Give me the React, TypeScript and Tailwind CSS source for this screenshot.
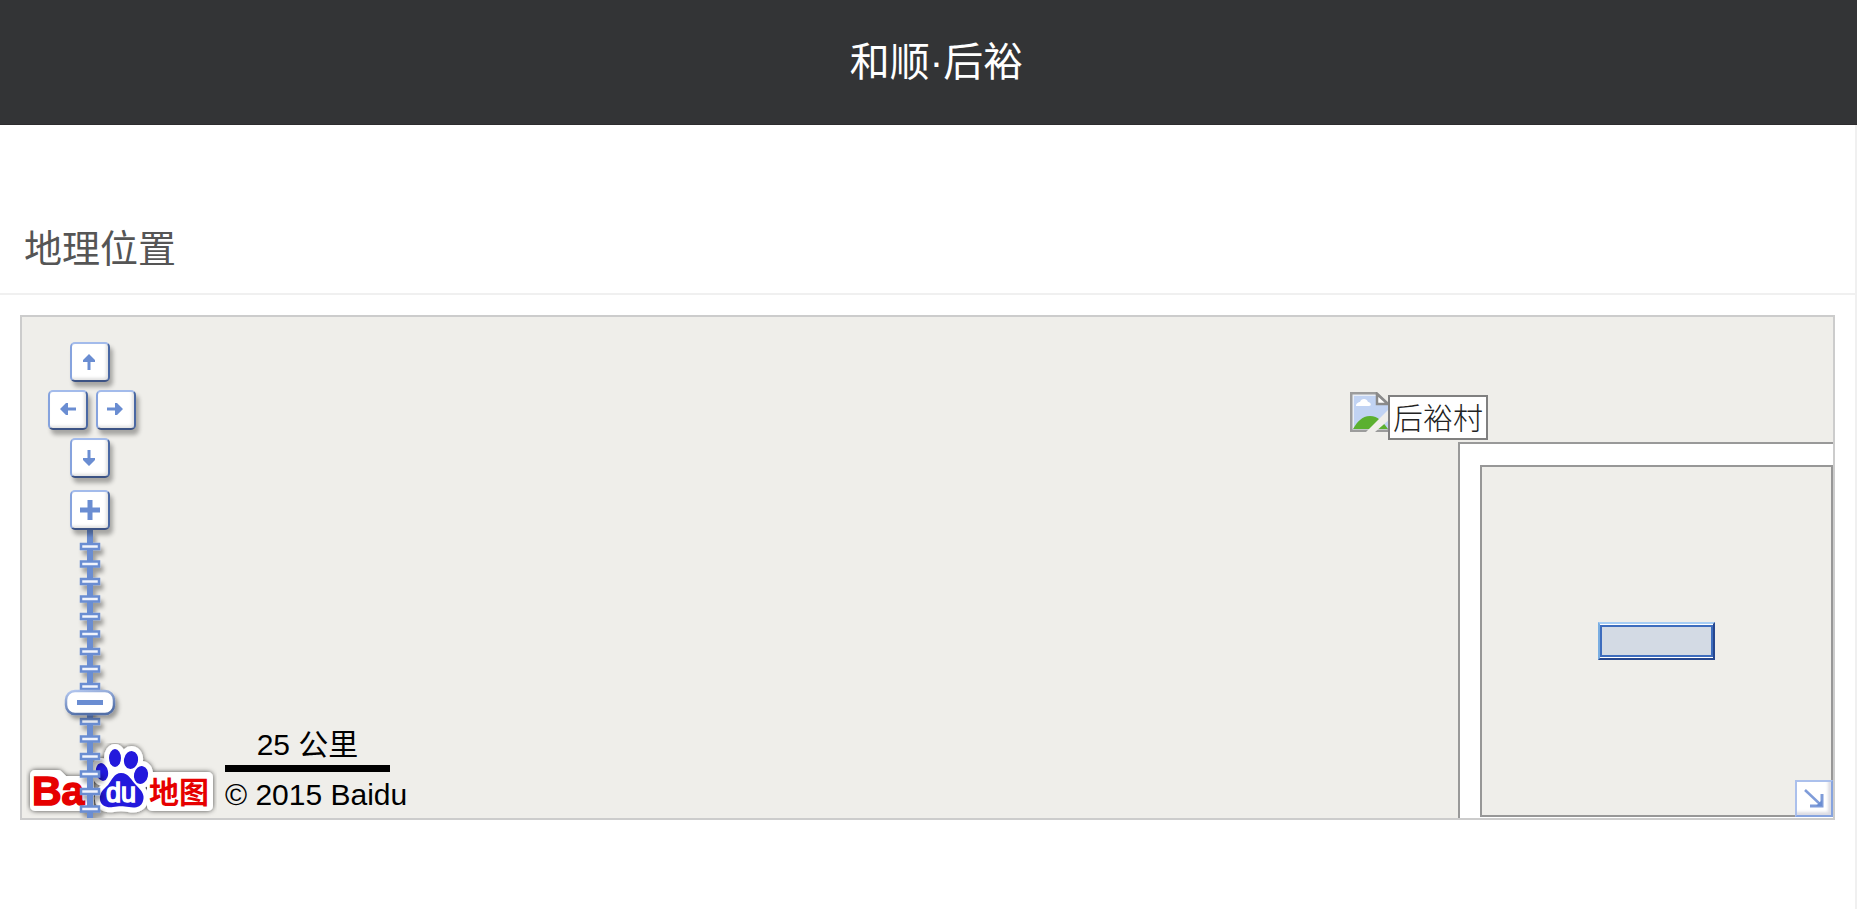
import { useState } from "react";

const TICKS = Array.from({ length: 16 }, (_, i) => 16 + i * 17.5);

const PAN_ARROWS = {
  up: "M17 10l6 6v2h-4.500v8h-3v-8H11v-2z",
  down: "M17 26l6-6v-2h-4.500v-8h-3v8H11v2z",
  left: "M10 17l6-6h2v4.500h8v3h-8V23h-2z",
  right: "M25 17l-6-6h-2v4.500H9v3h8V23h2z",
  plus: "M15.500 8h5v7.500H28v5h-7.500V28h-5v-7.500H8v-5h7.500z"
};

type ControlKind = keyof typeof PAN_ARROWS;

function ControlButton({ kind, label }: { kind: ControlKind; label: string }) {
  return (
    <button
      type="button"
      aria-label={label}
      className="relative z-10 block h-10 w-10 shrink-0 rounded-[5px] border-2 border-t-[#a3bbeb] border-r-[#4a68a3] border-b-[#3c5384] border-l-[#86a3de] bg-white shadow-[3px_5px_4px_rgba(0,0,0,0.3),inset_-2px_-2px_3px_rgba(0,0,0,0.12)]"
    >
      <svg viewBox="0 0 36 36" className="h-9 w-9" fill="#6a8dd2">
        <path d={PAN_ARROWS[kind]} />
      </svg>
    </button>
  );
}

function ZoomSlider() {
  const [zoom, setZoom] = useState(7);

  return (
    <div className="relative -ml-[5px] h-[288px] w-[50px]">
      <svg viewBox="0 0 50 288" className="h-full w-full overflow-visible">
        <defs>
          <filter id="railShadow" x="-50%" y="-5%" width="220%" height="110%">
            <feDropShadow dx="3" dy="5" stdDeviation="2" floodColor="#000" floodOpacity="0.35" />
          </filter>
          <filter id="thumbShadow" x="-20%" y="-20%" width="150%" height="190%">
            <feDropShadow dx="3" dy="4" stdDeviation="2" floodColor="#000" floodOpacity="0.35" />
          </filter>
          <linearGradient id="thumbEdge" x1="0" y1="0" x2="0.4" y2="1">
            <stop offset="0" stopColor="#b4c8f0" />
            <stop offset="1" stopColor="#526fa8" />
          </linearGradient>
        </defs>
        <g filter="url(#railShadow)">
          <rect x="22" y="0" width="6" height="288" fill="#6a8dd2" />
          {TICKS.map((y) => (
            <rect key={y} x="16" y={y - 2} width="18" height="5" fill="#f1f4fc" stroke="#6a8dd2" strokeWidth="2.5" />
          ))}
        </g>
        <rect
          x="1"
          y="161"
          width="48"
          height="23"
          rx="9"
          fill="#fff"
          stroke="url(#thumbEdge)"
          strokeWidth="2.5"
          filter="url(#thumbShadow)"
        />
        <rect x="12" y="170" width="26" height="5" fill="#6a8dd2" />
      </svg>
      <input
        type="range"
        min={1}
        max={18}
        value={zoom}
        aria-label="缩放级别"
        onChange={(e) => setZoom(Number(e.target.value))}
        className="absolute inset-0 h-full w-full opacity-0 [writing-mode:vertical-lr]"
      />
    </div>
  );
}

function NavigationControl() {
  return (
    <div className="absolute top-[25px] left-[26px] z-10 flex flex-col gap-2">
      <div className="pl-[22px]">
        <ControlButton kind="up" label="向上平移" />
      </div>
      <div className="flex gap-2">
        <ControlButton kind="left" label="向左平移" />
        <ControlButton kind="right" label="向右平移" />
      </div>
      <div className="flex flex-col gap-3 pl-[22px]">
        <ControlButton kind="down" label="向下平移" />
        <div>
          <ControlButton kind="plus" label="放大一级" />
          <ZoomSlider />
        </div>
      </div>
    </div>
  );
}

function PawShapes() {
  return (
    <>
      <ellipse cx="88" cy="12" rx="6" ry="9" />
      <ellipse cx="104" cy="14" rx="7" ry="9" transform="rotate(10 104 14)" />
      <ellipse cx="75" cy="26" rx="6" ry="9" transform="rotate(-12 75 26)" />
      <ellipse cx="114" cy="29" rx="7" ry="9" transform="rotate(12 114 29)" />
      <path d="M94 27c8 0 10 7 15 12 6 6 9 10 7 16-2 7-9 7-14 6-6-1-10-1-16 0-6 1-12-1-13-7-1-7 3-10 8-15 4-5 6-12 13-12z" />
    </>
  );
}

function BaiduLogo() {
  return (
    <a href="#baidu" aria-label="百度地图" className="absolute bottom-1 left-[5px] block">
      <svg viewBox="0 0 191 68" className="h-[68px] w-[191px] overflow-visible">
        <defs>
          <filter id="logoShadow" x="-5%" y="-10%" width="110%" height="125%">
            <feDropShadow dx="0" dy="0" stdDeviation="2.500" floodColor="#000" floodOpacity="0.7" />
          </filter>
        </defs>
        <g fill="#fff" stroke="#fff" strokeWidth="10" strokeLinejoin="round" filter="url(#logoShadow)">
          <path d="M8 29h23l6 6h25v25H8z" />
          <rect x="125" y="31" width="56" height="29" />
          <PawShapes />
        </g>
        <g fill="#e60000">
          <text
            x="5"
            y="59"
            fontSize="41"
            fontWeight="700"
            stroke="#e60000"
            strokeWidth="1.5"
            className="font-['Liberation_Sans',sans-serif]"
          >
            Ba
          </text>
          <text x="122" y="57" fontSize="30" fontWeight="700" className="font-['Noto_Sans_CJK_SC',sans-serif]">
            地图
          </text>
        </g>
        <g fill="#2319dc">
          <PawShapes />
        </g>
        <text
          x="79"
          y="56"
          fontSize="27"
          fill="#fff"
          stroke="#fff"
          strokeWidth="1.5"
          className="font-['Liberation_Sans',sans-serif]"
        >
          du
        </text>
      </svg>
    </a>
  );
}

function MissingImageIcon() {
  return (
    <svg viewBox="0 0 40 40" className="h-10 w-10 shrink-0">
      <path d="M1 1h25l13 12v26H1z" fill="#e9eef6" stroke="#9c9c9c" strokeWidth="3" />
      <path d="M4 4h22v9h12v24H4z" fill="#c1d3f3" />
      <path d="M6 14c0-3 3-4 4-4 1-4 7-4 8 0 3 0 4 4 1 4z" fill="#fff" />
      <path d="M3 37c4-7 9-13 17-13 8 0 13 6 18 13z" fill="#5bb030" />
      <path d="M40 16L16 40h9l15-13z" fill="#efeeea" />
      <path d="M27 2v10h11z" fill="#fff" stroke="#8a8a8a" strokeWidth="2.5" />
    </svg>
  );
}

function OverviewPanel() {
  return (
    <div className="absolute right-0 bottom-0 h-[376px] w-[375px] border-t-2 border-l-2 border-[#999] bg-white pt-[21px] pb-px pl-5">
      <div className="relative flex h-full items-center justify-center border-2 border-[#979797] bg-[#efeeea]">
        <div className="h-[38px] w-[117px] border-2 border-t-[#a6cdf5] border-r-[#26478f] border-b-[#26478f] border-l-[#7aaee2] bg-white py-px">
          <div className="h-full border-2 border-[#3d6cbd] bg-[#d3dae4]" />
        </div>
        <button
          type="button"
          aria-label="收起缩略图"
          className="absolute -right-0.5 -bottom-0.5 h-[37px] w-[38px] border-2 border-t-[#abc0ec] border-r-[#86a3de] border-b-[#86a3de] border-l-[#abc0ec] bg-white shadow-[inset_-3px_-3px_3px_rgba(0,0,60,0.14)]"
        >
          <svg viewBox="0 0 34 33" className="h-full w-full" fill="#6a8dd2" stroke="#7f9cd9">
            <path d="M8 8l16 15" strokeWidth="2.5" />
            <path d="M25 12v12H13" strokeWidth="3" fill="none" />
            <path d="M25 18v6h-6z" stroke="none" />
          </svg>
        </button>
      </div>
    </div>
  );
}

function LocationMap() {
  return (
    <div className="relative mx-5 mt-5 h-[505px] overflow-hidden border-2 border-[#ccc] bg-[#efeeea]">
      <NavigationControl />
      <BaiduLogo />

      <div className="absolute bottom-1 left-[203px] font-['Liberation_Sans','Noto_Sans_CJK_SC',sans-serif] text-[30px] leading-[38px] whitespace-nowrap text-black">
        <div className="w-[165px] border-b-[7px] border-black pb-px text-center">25 公里</div>
        <div className="pt-1">© 2015 Baidu</div>
      </div>

      <div className="absolute top-[75px] right-[443px] h-10 w-10">
        <MissingImageIcon />
        <div className="absolute top-[3px] left-[38px] h-[45px] w-[100px] border-2 border-[#808080] bg-white text-center font-['Noto_Sans_CJK_SC',sans-serif] text-[30px] leading-[38px] font-light whitespace-nowrap text-[#222]">
          后裕村
        </div>
      </div>

      <OverviewPanel />
    </div>
  );
}

export default function App() {
  return (
    <div className="flex min-h-screen flex-col bg-white font-['Liberation_Sans','Noto_Sans_CJK_SC',sans-serif]">
      <header className="flex h-[125px] shrink-0 items-center justify-center border-b border-[#2d2c2e] bg-[#333436] pl-4">
        <h1 className="text-[40px] leading-none text-white">和顺·后裕</h1>
      </header>
      <main className="flex-1 border-r-2 border-[#f0f0f0]">
        <h2 className="border-b-2 border-[#f0f0f0] pt-[100px] pb-5 pl-6 text-[38px] leading-[48px] text-[#555]">
          地理位置
        </h2>
        <LocationMap />
      </main>
    </div>
  );
}
